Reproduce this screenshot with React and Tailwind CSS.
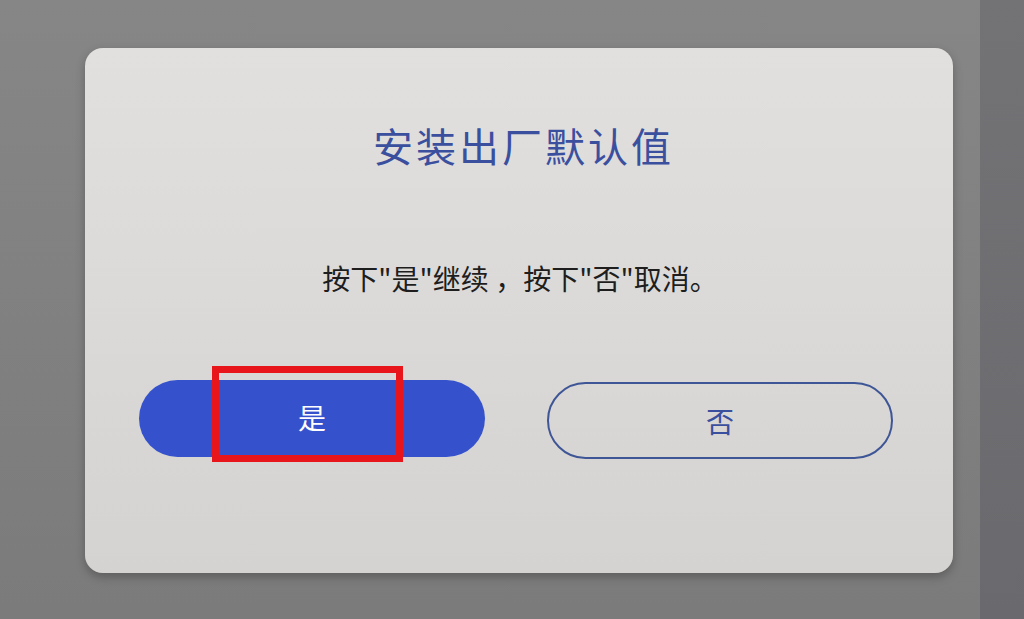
export default function App() {
  const cjk = { fontFamily: '"Noto Sans CJK SC", "Noto Sans", sans-serif' };
  return (
    <div className="w-[1024px] h-[619px] flex bg-[#858484] overflow-hidden" style={cjk}>
      <div className="flex-1 bg-gradient-to-b from-[#878686] to-[#7c7b7b] pt-[48px] pl-[85px]">
        <div className="w-[868px] h-[525px] rounded-[18px] bg-gradient-to-b from-[#e1e0de] to-[#d4d3d1] shadow-[0_4px_10px_rgba(0,0,0,0.25)] flex flex-col">
          <div className="h-[75px] shrink-0" />
          <div className="text-center text-[40px] leading-[44px] tracking-[3px] text-[#3b4f9f] pl-[9px]">
            安装出厂默认值
          </div>
          <div className="h-[94px] shrink-0" />
          <div className="text-center text-[28px] leading-[34px] text-[#1e1e1e] pl-[2px]">
            按下"是"继续 ，按下"否"取消。
          </div>
          <div className="h-[85px] shrink-0" />
          <div className="flex pl-[54px] gap-[62px]">
            <div className="relative w-[346px] h-[77px] rounded-full bg-[#3552cc] flex items-center justify-center text-white text-[28px] pb-[4px]">
              是
              <div className="absolute left-[73px] top-[-14px] w-[191px] h-[96px] border-[7px] border-[#e8161b]" />
            </div>
            <div className="w-[346px] h-[77px] mt-[2px] rounded-full border-2 border-[#3e5596] flex items-center justify-center text-[#3b4f9f] text-[28px]">
              否
            </div>
          </div>
        </div>
      </div>
      <div className="w-[44px] bg-gradient-to-b from-[#737376] to-[#6a6a6e]" />
    </div>
  );
}
